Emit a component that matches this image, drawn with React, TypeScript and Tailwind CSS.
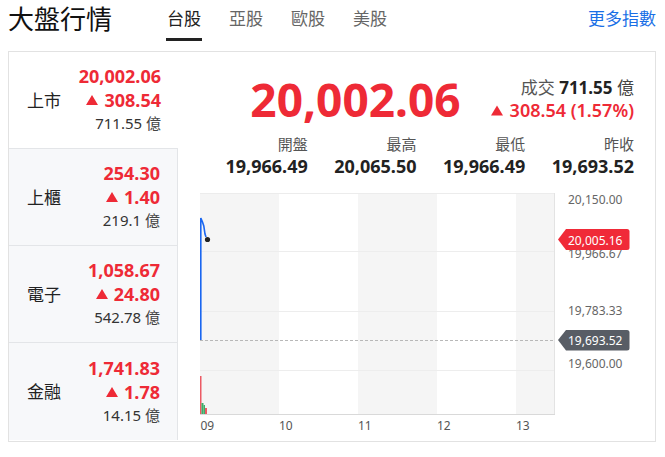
import React from "react";

const RED = "#ee2a36";

function Tri({ w = 12, h = 10 }: { w?: number; h?: number }) {
  return (
    <svg width={w} height={h} viewBox="0 0 12 10" className="inline-block">
      <polygon points="6,0 12,10 0,10" fill={RED} />
    </svg>
  );
}

type Row = { name: string; price: string; chg: string; vol: string };
const rows: Row[] = [
  { name: "上市", price: "20,002.06", chg: "308.54", vol: "711.55" },
  { name: "上櫃", price: "254.30", chg: "1.40", vol: "219.1" },
  { name: "電子", price: "1,058.67", chg: "24.80", vol: "542.78" },
  { name: "金融", price: "1,741.83", chg: "1.78", vol: "14.15" },
];

function SideRow({ r, i }: { r: Row; i: number }) {
  const active = i === 0;
  return (
    <div
      className={
        "flex h-[97px] items-center justify-between pl-[18px] pr-[17px] " +
        (active ? "bg-white border-b border-[#e3e5e8] " : "bg-[#f7f8fa] border-r border-[#e3e5e8] ") +
        (i < 3 ? (active ? "" : "border-b border-[#e3e5e8]") : "h-[96px]")
      }
    >
      <div className="text-[17px] text-[#222] leading-none">{r.name}</div>
      <div className="flex flex-col items-end">
        <div className="text-[18px] font-bold leading-[23px]" style={{ color: RED }}>
          {r.price}
        </div>
        <div className="flex items-center gap-[6px] text-[18px] font-bold leading-[24px]" style={{ color: RED }}>
          <Tri />
          <span>{r.chg}</span>
        </div>
        <div className="text-[15px] leading-[23px] text-[#333]">
          {r.vol} <span className="text-[#444]">億</span>
        </div>
      </div>
    </div>
  );
}

function Chart() {
  const font = "'Noto Sans', 'Noto Sans CJK TC', sans-serif";
  return (
    <svg width="476" height="261" viewBox="178 180 476 261" className="block">
      <rect x="200" y="193" width="79" height="221" fill="#f5f5f5" />
      <rect x="358" y="193" width="79" height="221" fill="#f5f5f5" />
      <rect x="516" y="193" width="39" height="221" fill="#f5f5f5" />
      <line x1="200" x2="555" y1="193.5" y2="193.5" stroke="#ececec" />
      <line x1="200" x2="555" y1="251.5" y2="251.5" stroke="#ededed" />
      <line x1="200" x2="555" y1="311.5" y2="311.5" stroke="#ededed" />
      <line x1="200" x2="555" y1="370.5" y2="370.5" stroke="#ededed" />
      <line x1="554.5" x2="554.5" y1="193" y2="414" stroke="#e3e3e3" />
      <line x1="200" x2="555" y1="414.5" y2="414.5" stroke="#d9d9d9" />
      <line x1="200" x2="555" y1="340.5" y2="340.5" stroke="#b8b8b8" strokeDasharray="3 2" />
      {/* volume */}
      <rect x="200" y="376" width="1.5" height="38" fill="#ec5a64" />
      <rect x="201.5" y="403" width="2" height="11" fill="#3dae6a" />
      <rect x="203.5" y="405" width="1.5" height="9" fill="#3dae6a" />
      <rect x="205" y="408" width="2" height="6" fill="#ec5a64" />
      {/* price line */}
      <polyline
        points="200.8,340 200.8,218 202.5,222 203.8,226 205,234 206,237"
        fill="none"
        stroke="#1a66f0"
        strokeWidth="1.6"
      />
      <circle cx="207.5" cy="239.5" r="2.6" fill="#222" />
      {/* y labels */}
      <g fontFamily={font} fontSize="12" fill="#666">
        <text x="568" y="199" dominantBaseline="central">20,150.00</text>
        <text x="568" y="253" dominantBaseline="central">19,966.67</text>
        <text x="568" y="310" dominantBaseline="central">19,783.33</text>
        <text x="568" y="363" dominantBaseline="central">19,600.00</text>
      </g>
      {/* tags */}
      <path d="M558 239.5 L566 229 H627 Q629.5 229 629.5 231.5 V247.5 Q629.5 250 627 250 H566 Z" fill="#f02a38" />
      <text x="568" y="240" dominantBaseline="central" fontFamily={font} fontSize="12" fill="#fff">20,005.16</text>
      <path d="M558 340 L566 330 H627 Q629.5 330 629.5 332.5 V348 Q629.5 350.5 627 350.5 H566 Z" fill="#585d65" />
      <text x="568" y="340.5" dominantBaseline="central" fontFamily={font} fontSize="12" fill="#fff">19,693.52</text>
      {/* x labels */}
      <g fontFamily={font} fontSize="12" fill="#555">
        <text x="200.5" y="425" dominantBaseline="central">09</text>
        <text x="279" y="425" dominantBaseline="central">10</text>
        <text x="358" y="425" dominantBaseline="central">11</text>
        <text x="437" y="425" dominantBaseline="central">12</text>
        <text x="516" y="425" dominantBaseline="central">13</text>
      </g>
    </svg>
  );
}

export default function App() {
  const stats = [
    { k: "開盤", v: "19,966.49" },
    { k: "最高", v: "20,065.50" },
    { k: "最低", v: "19,966.49" },
    { k: "昨收", v: "19,693.52" },
  ];
  return (
    <div className="w-[665px] h-[457px] bg-white overflow-hidden font-['Noto_Sans','Noto_Sans_CJK_TC',sans-serif] text-[#222]">
      {/* header */}
      <div className="flex h-[51px] items-start pl-[8px] pr-[9px]">
        <div className="text-[26px] leading-[39px] text-[#111]">大盤行情</div>
        <div className="ml-[54px] flex gap-[26px]">
          <div className="h-[41px] w-[36px] border-b-[3px] border-[#222] text-center text-[17px] leading-[38px] text-[#222]">台股</div>
          <div className="h-[41px] w-[36px] text-center text-[17px] leading-[38px] text-[#666]">亞股</div>
          <div className="h-[41px] w-[36px] text-center text-[17px] leading-[38px] text-[#666]">歐股</div>
          <div className="h-[41px] w-[36px] text-center text-[17px] leading-[38px] text-[#666]">美股</div>
        </div>
        <div className="ml-auto text-[17px] leading-[38px] text-[#1a6fe6]">更多指數</div>
      </div>
      {/* panel */}
      <div className="ml-[8px] flex h-[391px] w-[648px] border border-[#e2e2e2]">
        <div className="flex w-[169px] flex-col">
          {rows.map((r, i) => (
            <SideRow key={r.name} r={r} i={i} />
          ))}
        </div>
        <div className="flex flex-1 flex-col">
          <div className="px-[21px]">
            <div className="mt-[23px] flex h-[48px] items-center justify-end gap-[30px]">
              <div className="text-[46px] font-bold leading-[48px]" style={{ color: RED }}>
                20,002.06
              </div>
              <div className="flex flex-col items-end">
                <div className="text-[17px] leading-[23px] text-[#555]">
                  成交 <span className="font-bold text-[#222]">711.55</span> <span className="text-[#444]">億</span>
                </div>
                <div className="flex items-center gap-[7px] text-[18px] font-semibold leading-[23px]" style={{ color: RED }}>
                  <Tri w={12} h={11} />
                  <span>308.54 (1.57%)</span>
                </div>
              </div>
            </div>
            <div className="mt-[11px] grid grid-cols-4">
              {stats.map((s) => (
                <div key={s.k} className="flex flex-col items-end">
                  <div className="text-[15px] leading-[20px] text-[#555]">{s.k}</div>
                  <div className="text-[18px] font-bold leading-[24px] text-[#222]">{s.v}</div>
                </div>
              ))}
            </div>
          </div>
          <div className="mt-[2px]">
            <Chart />
          </div>
        </div>
      </div>
    </div>
  );
}
